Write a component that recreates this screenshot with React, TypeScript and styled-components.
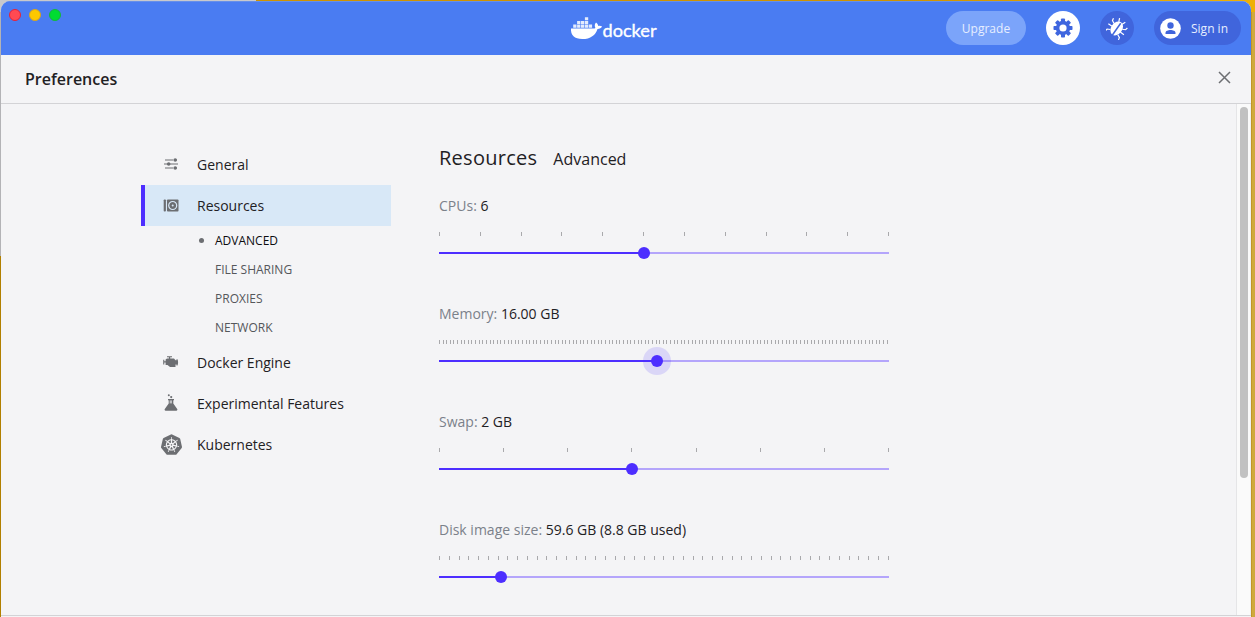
import React from 'react';
import styled, { createGlobalStyle } from 'styled-components';
import { SiKubernetes } from 'react-icons/si';

const GlobalStyle = createGlobalStyle`
  * { box-sizing: border-box; }
  html, body { margin: 0; height: 100%; overflow: hidden; }
  body { font-family: 'Open Sans', 'Noto Sans', sans-serif; color: #1f2124; }
`;

const Desktop = styled.div`
  width: 1255px;
  height: 617px;
  padding: 1px 4px 0 1px;
  background:
    linear-gradient(90deg, #b98d20, #d0aa3c 1.5px, #cda93f) 1251px 12px / 4px 605px no-repeat,
    linear-gradient(90deg, #c9c9cc 0 256px, #cf9200 256px 900px, #eeb006 1250px) 0 0 / 1255px 12px no-repeat,
    linear-gradient(#b3b3b6 0 256px, #b17f00 256px) 0 0 / 1px 617px no-repeat;
`;

const Window = styled.div`
  width: 1250px;
  height: 616px;
  display: flex;
  flex-direction: column;
  background: #f4f4f6;
  border-radius: 9px 9px 0 0;
  overflow: hidden;
`;

const TitleBar = styled.header`
  height: 54px;
  flex: none;
  display: grid;
  grid-template-columns: 569px 88px 1fr;
  background: #4a7cf2;
  border-top: 1px solid #668fea;
`;

const TrafficLights = styled.div`
  display: flex;
  gap: 8px;
  padding: 7px 0 0 8px;
`;

const Light = styled.span<{ $fill: string; $edge: string }>`
  width: 12px;
  height: 12px;
  border-radius: 50%;
  background: ${(p) => p.$fill};
  border: 1px solid ${(p) => p.$edge};
`;

const Logo = styled.svg`
  width: 88px;
  height: 28px;
  margin-top: 11px;
`;

const Actions = styled.div`
  display: flex;
  justify-content: flex-end;
  padding: 9px 10px 0 0;
`;

const Pill = styled.button<{ $width: number; $bg: string; $align?: string }>`
  width: ${(p) => p.$width}px;
  height: 34px;
  margin-left: 20px;
  padding: ${(p) => (p.$align ? '0 0 0 6px' : '0')};
  border: 0;
  border-radius: 17px;
  display: flex;
  align-items: center;
  justify-content: ${(p) => p.$align ?? 'center'};
  gap: 10px;
  background: ${(p) => p.$bg};
  color: #e6eeff;
  font: 12px/18px 'Open Sans', sans-serif;
  span { padding-top: 1px; }
`;

const Heading = styled.div`
  height: 49px;
  flex: none;
  display: flex;
  align-items: center;
  justify-content: space-between;
  padding: 0 19px 0 24px;
  border-bottom: 1px solid #d3d3d6;
  h1 { margin: 0; font-size: 16px; line-height: 22px; font-weight: 600; }
  svg { margin-top: -3px; }
`;

const Body = styled.div`
  height: 511px;
  flex: none;
  display: flex;
`;

const Sidebar = styled.nav`
  width: 250px;
  margin: 40px 48px 0 140px;
  flex: none;
`;

const NavItem = styled.div<{ $active?: boolean }>`
  height: 41px;
  display: flex;
  align-items: center;
  padding-left: 15px;
  border-left: 4px solid ${(p) => (p.$active ? '#4d2eff' : 'transparent')};
  background: ${(p) => (p.$active ? '#d8e8f7' : 'transparent')};
  font-size: 14px;
  line-height: 20px;
`;

const NavIcon = styled.span`
  width: 22px;
  height: 22px;
  margin: -1px 15px 0 0;
  display: flex;
  align-items: center;
  justify-content: center;
  color: #6c6e72;
`;

const SubList = styled.ul`
  margin: 0;
  padding: 0;
  list-style: none;
`;

const SubItem = styled.li<{ $active?: boolean }>`
  height: 29px;
  display: flex;
  align-items: center;
  padding-left: 58px;
  gap: 11px;
  font-size: 12px;
  color: ${(p) => (p.$active ? '#0d0d10' : '#55575b')};
  &::before {
    content: '';
    width: 5px;
    height: 5px;
    border-radius: 50%;
    background: ${(p) => (p.$active ? '#6c6e72' : 'transparent')};
  }
`;

const Main = styled.main`
  width: 450px;
  padding-top: 40px;
  flex: 1;
`;

const Title = styled.h2`
  margin: 0;
  height: 28px;
  display: flex;
  align-items: baseline;
  gap: 16px;
  font-size: 20px;
  line-height: 28px;
  font-weight: 400;
  letter-spacing: 0.27px;
  small { font-size: 16px; letter-spacing: 0; }
`;

const Setting = styled.section`
  width: 450px;
  height: 108px;
  padding-top: 24px;
`;

const Label = styled.div`
  height: 20px;
  font-size: 14px;
  line-height: 20px;
  color: #7b818a;
  b { font-weight: 400; color: #1f2124; }
`;

const Ticks = styled.div`
  height: 4px;
  margin: 16px 0 13px;
  display: flex;
  justify-content: space-between;
  i { width: 1px; height: 4px; background: #a9a9ac; }
`;

const Track = styled.div`
  height: 8px;
  display: flex;
  align-items: center;
`;

const Fill = styled.div`
  height: 2px;
  flex: none;
  background: #4d2eff;
`;

const Rest = styled.div`
  height: 2px;
  flex: 1;
  background: #b4a5fb;
`;

const Thumb = styled.div<{ $focus?: boolean }>`
  width: 12px;
  height: 12px;
  margin: 0 -6px;
  flex: none;
  z-index: 1;
  border-radius: 50%;
  background: #4d2eff;
  box-shadow: ${(p) => (p.$focus ? '0 0 0 8px rgba(77, 46, 255, 0.15)' : 'none')};
`;

const ScrollBar = styled.div`
  width: 15px;
  padding: 3px 0 0 3px;
  background: #fafafa;
  border-left: 1px solid #e5e5e7;
  border-right: 1px solid #eeeeef;
`;

const ScrollThumb = styled.div`
  width: 8px;
  height: 371px;
  border-radius: 4px;
  background: #c1c1c1;
`;

const Footer = styled.footer`
  flex: 1;
  border-top: 1px solid #d3d3d6;
`;

const DockerLogo = () => (
  <Logo viewBox="0 0 88 28" fill="#fff">
    <path d="M1 15.500h22.200c1 0 1.700-.2 2.200-.6-1-1.800-.8-4 .6-5.400 1.300 1 2.100 2 2.200 3.400 1.200-.3 2.900-.1 3.900.6-.8 1.600-2.400 2.400-4.600 2.400C25.500 22 20.600 26 12.300 26 4.500 26 .5 22 1 15.500z" />
    <path
      opacity=".85"
      d="M3.200 11.600h3.300v3.100H3.200zM7.100 11.600h3.300v3.100H7.100zM11 11.600h3.300v3.100H11zM14.900 11.600h3.300v3.100h-3.300zM18.800 11.600h3.300v3.100h-3.300zM7.100 7.900h3.300V11H7.100zM11 7.900h3.300V11H11zM14.900 7.900h3.300V11h-3.300zM14.900 4.200h3.300v3.100h-3.300z"
    />
    <text x="32.500" y="23.500" fontFamily="Lato, sans-serif" fontSize="17" fontWeight="400" stroke="#fff" strokeWidth=".35" textLength="54" lengthAdjust="spacingAndGlyphs">
      docker
    </text>
  </Logo>
);

const GearIcon = () => (
  <svg width="20" height="20" viewBox="-10 -10 20 20" fill="#3f66df">
    {[0, 45, 90, 135].map((a) => (
      <rect key={a} x="-2" y="-9.500" width="4" height="19" rx=".8" transform={`rotate(${a})`} />
    ))}
    <circle r="7.200" />
    <circle r="3.600" fill="#fff" />
  </svg>
);

const BugIcon = () => (
  <svg width="22" height="24" viewBox="-11 -12 22 24">
    <g transform="rotate(35)">
      <ellipse cy=".5" rx="5.600" ry="7.600" fill="#fff" />
      <path
        d="M-5-2L-8-3.500-8.500-6M5-2L8-3.500 8.500-6M-5 1.500H-9.500M5 1.500H9.500M-4.500 5L-7.500 6.500-8 9M4.500 5L7.500 6.500 8 9M-2-6L-3.500-9.500M2-6L3.500-9.500"
        fill="none"
        stroke="#fff"
        strokeWidth="1.200"
      />
      <path d="M.3-6V9" stroke="#4065dc" strokeWidth="1.500" />
    </g>
  </svg>
);

const UserIcon = () => (
  <svg width="21" height="21" viewBox="0 0 21 21">
    <circle cx="10.500" cy="10.500" r="10.300" fill="#fff" />
    <circle cx="10.500" cy="7.500" r="3.200" fill="#4065dc" />
    <path d="M5.500 16v-1.200c0-2 2.600-2.900 5-2.900s5 .9 5 2.900V16z" fill="#4065dc" />
  </svg>
);

const CloseIcon = () => (
  <svg width="15" height="15" viewBox="0 0 15 15">
    <path d="M2 2L13 13M13 2L2 13" stroke="#6c6e72" strokeWidth="1.500" fill="none" />
  </svg>
);

const SlidersIcon = () => (
  <svg width="14" height="12" viewBox="0 0 14 12" fill="currentColor">
    <path d="M1 1.400h8v1.200H1zM10 1.400h3v1.200h-3zM0 5.400h14v1.200H0zM1 9.400h8v1.200H1zM10 9.400h3v1.200h-3z" />
    <circle cx="11.200" cy="2" r="1.800" />
    <circle cx="4.700" cy="6" r="1.800" />
    <circle cx="11.200" cy="10" r="1.800" />
  </svg>
);

const DiskIcon = () => (
  <svg width="16" height="13" viewBox="0 0 16 13">
    <rect x=".7" y=".5" width="2.200" height="12" rx=".8" fill="currentColor" />
    <rect x="4" y=".5" width="11.500" height="12" rx=".8" fill="currentColor" />
    <circle cx="9.700" cy="6.500" r="4" fill="none" stroke="#d8e8f7" strokeWidth="1.200" />
    <circle cx="9.700" cy="6.500" r="1" fill="#d8e8f7" />
  </svg>
);

const EngineIcon = () => (
  <svg width="16" height="12" viewBox="0 0 16 12" fill="currentColor">
    <path d="M4 .2h5v1H7.200v1.300H11l1.500 1.700h1V3.300h1c.8 1.800.8 4.500 0 6.200h-1V8.400h-1V11H7L4.500 9H2.600V6.500H1.300V8.500H.2V3.800h1.100v1.500h1.300V3.600L4 2.500h1.900V1.200H4z" />
  </svg>
);

const FlaskIcon = () => (
  <svg width="14" height="18" viewBox="0 0 14 18" fill="currentColor">
    <circle cx="4.800" cy="1.300" r="1" />
    <circle cx="7.200" cy="3.100" r="1.100" />
    <path d="M4 5h6v1.200H9.300v3.200l3.900 5.700c.5.800.1 1.600-.8 1.600H1.600c-.9 0-1.300-.8-.8-1.600l3.900-5.700V6.200H4z" />
    <path d="M5.600 6.400h2.400v3H5.600z" fill="#f4f4f6" opacity=".6" />
  </svg>
);

type SliderProps = { label: string; value: string; ticks: number; percent: number; focus?: boolean };

const Slider = ({ label, value, ticks, percent, focus }: SliderProps) => (
  <Setting>
    <Label>
      {label}: <b>{value}</b>
    </Label>
    <Ticks>
      {Array.from({ length: ticks }, (_, i) => (
        <i key={i} />
      ))}
    </Ticks>
    <Track>
      <Fill style={{ width: `${percent}%` }} />
      <Thumb $focus={focus} />
      <Rest />
    </Track>
  </Setting>
);

export default function App() {
  return (
    <>
      <GlobalStyle />
      <Desktop>
        <Window>
          <TitleBar>
            <TrafficLights>
              <Light $fill="#ff4a52" $edge="#e0243c" />
              <Light $fill="#fdc800" $edge="#d8a520" />
              <Light $fill="#00dc32" $edge="#16b53c" />
            </TrafficLights>
            <DockerLogo />
            <Actions>
              <Pill $width={80} $bg="#7ba4fa"><span>Upgrade</span></Pill>
              <Pill $width={34} $bg="#ffffff" aria-label="Settings"><GearIcon /></Pill>
              <Pill $width={34} $bg="#4065dc" aria-label="Troubleshoot"><BugIcon /></Pill>
              <Pill $width={87} $bg="#4065dc" $align="flex-start"><UserIcon /><span>Sign in</span></Pill>
            </Actions>
          </TitleBar>
          <Heading>
            <h1>Preferences</h1>
            <CloseIcon />
          </Heading>
          <Body>
            <Sidebar>
              <NavItem><NavIcon><SlidersIcon /></NavIcon>General</NavItem>
              <NavItem $active><NavIcon><DiskIcon /></NavIcon>Resources</NavItem>
              <SubList>
                <SubItem $active>ADVANCED</SubItem>
                <SubItem>FILE SHARING</SubItem>
                <SubItem>PROXIES</SubItem>
                <SubItem>NETWORK</SubItem>
              </SubList>
              <NavItem><NavIcon><EngineIcon /></NavIcon>Docker Engine</NavItem>
              <NavItem><NavIcon><FlaskIcon /></NavIcon>Experimental Features</NavItem>
              <NavItem><NavIcon><SiKubernetes size={21} /></NavIcon>Kubernetes</NavItem>
            </Sidebar>
            <Main>
              <Title>Resources <small>Advanced</small></Title>
              <Slider label="CPUs" value="6" ticks={12} percent={45.45} />
              <Slider label="Memory" value="16.00 GB" ticks={125} percent={48.39} focus />
              <Slider label="Swap" value="2 GB" ticks={8} percent={42.86} />
              <Slider label="Disk image size" value="59.6 GB (8.8 GB used)" ticks={47} percent={13.7} />
            </Main>
            <ScrollBar><ScrollThumb /></ScrollBar>
          </Body>
          <Footer />
        </Window>
      </Desktop>
    </>
  );
}
